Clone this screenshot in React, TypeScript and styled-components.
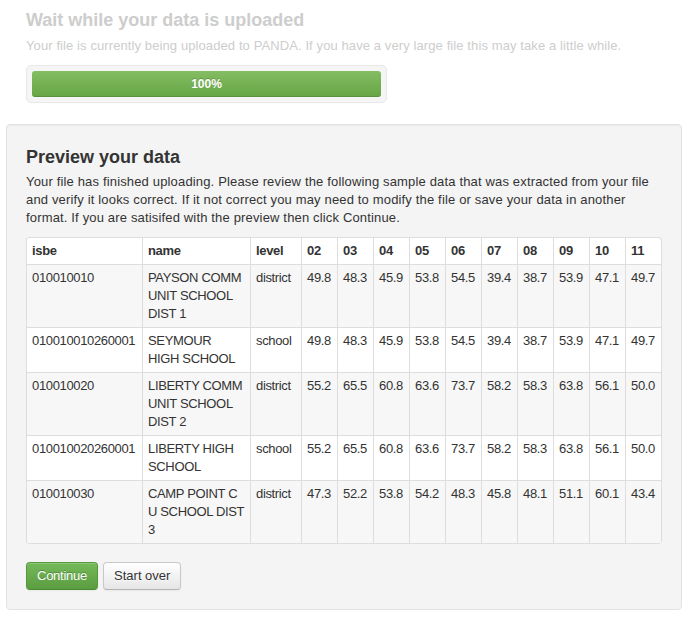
import React from "react";
import styled, { createGlobalStyle } from "styled-components";

const Global = createGlobalStyle`
  html, body { margin: 0; padding: 0; background: #fff; }
  body {
    font-family: "Liberation Sans", Arial, Helvetica, sans-serif;
    font-size: 13px;
    line-height: 18px;
    color: #333;
  }
`;

const Page = styled.div`
  padding: 10px 6px 0;
`;

const UploadSection = styled.div`
  padding: 0 20px;
`;

const FadedTitle = styled.h3`
  margin: 0 0 7px;
  font-size: 18px;
  line-height: 20px;
  font-weight: bold;
  color: #cdcdcd;
`;

const FadedText = styled.p`
  margin: 0 0 10px;
  color: #cdcdcd;
  letter-spacing: 0.1px;
`;

const ProgressWell = styled.div`
  width: 361px;
  box-sizing: border-box;
  padding: 5px;
  background: #f5f5f5;
  border: 1px solid #e8e8e8;
  border-radius: 5px;
`;

const ProgressBar = styled.div<{ $pct: number }>`
  height: 26px;
  border-radius: 3px;
  background: linear-gradient(to bottom, #84bd62, #66a546);
  box-shadow: inset 0 -1px 0 rgba(0, 0, 0, 0.12);
  color: #fff;
  font-weight: bold;
  font-size: 12px;
  line-height: 26px;
  text-align: center;
  text-shadow: 0 -1px 0 rgba(0, 0, 0, 0.2);
`;

const Well = styled.div`
  margin-top: 21px;
  padding: 19px;
  background: #f4f4f4;
  border: 1px solid #e3e3e3;
  border-radius: 4px;
  box-shadow: inset 0 1px 1px rgba(0, 0, 0, 0.04);
`;

const Title = styled.h3`
  margin: 3px 0 6px;
  font-size: 18px;
  line-height: 20px;
  font-weight: bold;
  color: #333;
`;

const Intro = styled.p`
  margin: 0 0 10px;
  letter-spacing: 0.16px;
`;

const Table = styled.table`
  width: 636px;
  table-layout: fixed;
  border-collapse: separate;
  border-spacing: 0;
  border: 1px solid #ddd;
  border-left: 0;
  border-radius: 4px;
  background: #fff;
  margin-bottom: 18px;
  letter-spacing: -0.35px;
`;

const Col = styled.col<{ $w: number }>`
  width: ${(p) => p.$w}px;
`;

const Th = styled.th`
  padding: 4px 5px;
  text-align: left;
  font-weight: bold;
  vertical-align: bottom;
  border-left: 1px solid #ddd;
  white-space: nowrap;
`;

const Row = styled.tr<{ $odd: boolean }>`
  background: ${(p) => (p.$odd ? "#f7f7f7" : "#fff")};
`;

const Td = styled.td<{ $wrap?: boolean }>`
  padding: 4px 5px;
  vertical-align: top;
  border-left: 1px solid #ddd;
  border-top: 1px solid #ddd;
  white-space: ${(p) => (p.$wrap ? "normal" : "nowrap")};
`;

const Actions = styled.div`
  display: flex;
  gap: 5px;
`;

const Button = styled.button<{ $primary?: boolean }>`
  font-family: inherit;
  font-size: 13px;
  line-height: 18px;
  padding: 4px 10px;
  border-radius: 4px;
  cursor: pointer;
  letter-spacing: ${(p) => (p.$primary ? "-0.25px" : "0")};
  border: 1px solid ${(p) => (p.$primary ? "#559a3a" : "#c8c8c8")};
  border-bottom-color: ${(p) => (p.$primary ? "#4a8a32" : "#b3b3b3")};
  color: ${(p) => (p.$primary ? "#fff" : "#333")};
  text-shadow: ${(p) =>
    p.$primary ? "0 -1px 0 rgba(0,0,0,0.25)" : "0 1px 1px rgba(255,255,255,0.75)"};
  background: ${(p) =>
    p.$primary
      ? "linear-gradient(to bottom, #74b95a, #5b9d40)"
      : "linear-gradient(to bottom, #ffffff, #e6e6e6)"};
  box-shadow: inset 0 1px 0 rgba(255, 255, 255, 0.2), 0 1px 2px rgba(0, 0, 0, 0.05);
`;

const headers = ["isbe", "name", "level", "02", "03", "04", "05", "06", "07", "08", "09", "10", "11"];
const widths = [116, 108, 51, 36, 36, 36, 36, 36, 36, 36, 36, 36, 36];

const rows: string[][] = [
  ["010010010", "PAYSON COMM UNIT SCHOOL DIST 1", "district", "49.8", "48.3", "45.9", "53.8", "54.5", "39.4", "38.7", "53.9", "47.1", "49.7"],
  ["010010010260001", "SEYMOUR HIGH SCHOOL", "school", "49.8", "48.3", "45.9", "53.8", "54.5", "39.4", "38.7", "53.9", "47.1", "49.7"],
  ["010010020", "LIBERTY COMM UNIT SCHOOL DIST 2", "district", "55.2", "65.5", "60.8", "63.6", "73.7", "58.2", "58.3", "63.8", "56.1", "50.0"],
  ["010010020260001", "LIBERTY HIGH SCHOOL", "school", "55.2", "65.5", "60.8", "63.6", "73.7", "58.2", "58.3", "63.8", "56.1", "50.0"],
  ["010010030", "CAMP POINT C U SCHOOL DIST 3", "district", "47.3", "52.2", "53.8", "54.2", "48.3", "45.8", "48.1", "51.1", "60.1", "43.4"],
];

export default function App() {
  return (
    <>
      <Global />
      <Page>
        <UploadSection>
          <FadedTitle>Wait while your data is uploaded</FadedTitle>
          <FadedText>
            Your file is currently being uploaded to PANDA. If you have a very large file this may take a little while.
          </FadedText>
          <ProgressWell>
            <ProgressBar $pct={100}>100%</ProgressBar>
          </ProgressWell>
        </UploadSection>
        <Well>
          <Title>Preview your data</Title>
          <Intro>
            Your file has finished uploading. Please review the following sample data that was extracted from your file
            and verify it looks correct. If it not correct you may need to modify the file or save your data in another
            format. If you are satisifed with the preview then click Continue.
          </Intro>
          <Table>
            <colgroup>
              {widths.map((w, i) => (
                <Col key={i} $w={w} />
              ))}
            </colgroup>
            <thead>
              <tr>
                {headers.map((h) => (
                  <Th key={h}>{h}</Th>
                ))}
              </tr>
            </thead>
            <tbody>
              {rows.map((r, i) => (
                <Row key={i} $odd={i % 2 === 0}>
                  {r.map((c, j) => (
                    <Td key={j} $wrap={j === 1}>
                      {c}
                    </Td>
                  ))}
                </Row>
              ))}
            </tbody>
          </Table>
          <Actions>
            <Button $primary>Continue</Button>
            <Button>Start over</Button>
          </Actions>
        </Well>
      </Page>
    </>
  );
}
